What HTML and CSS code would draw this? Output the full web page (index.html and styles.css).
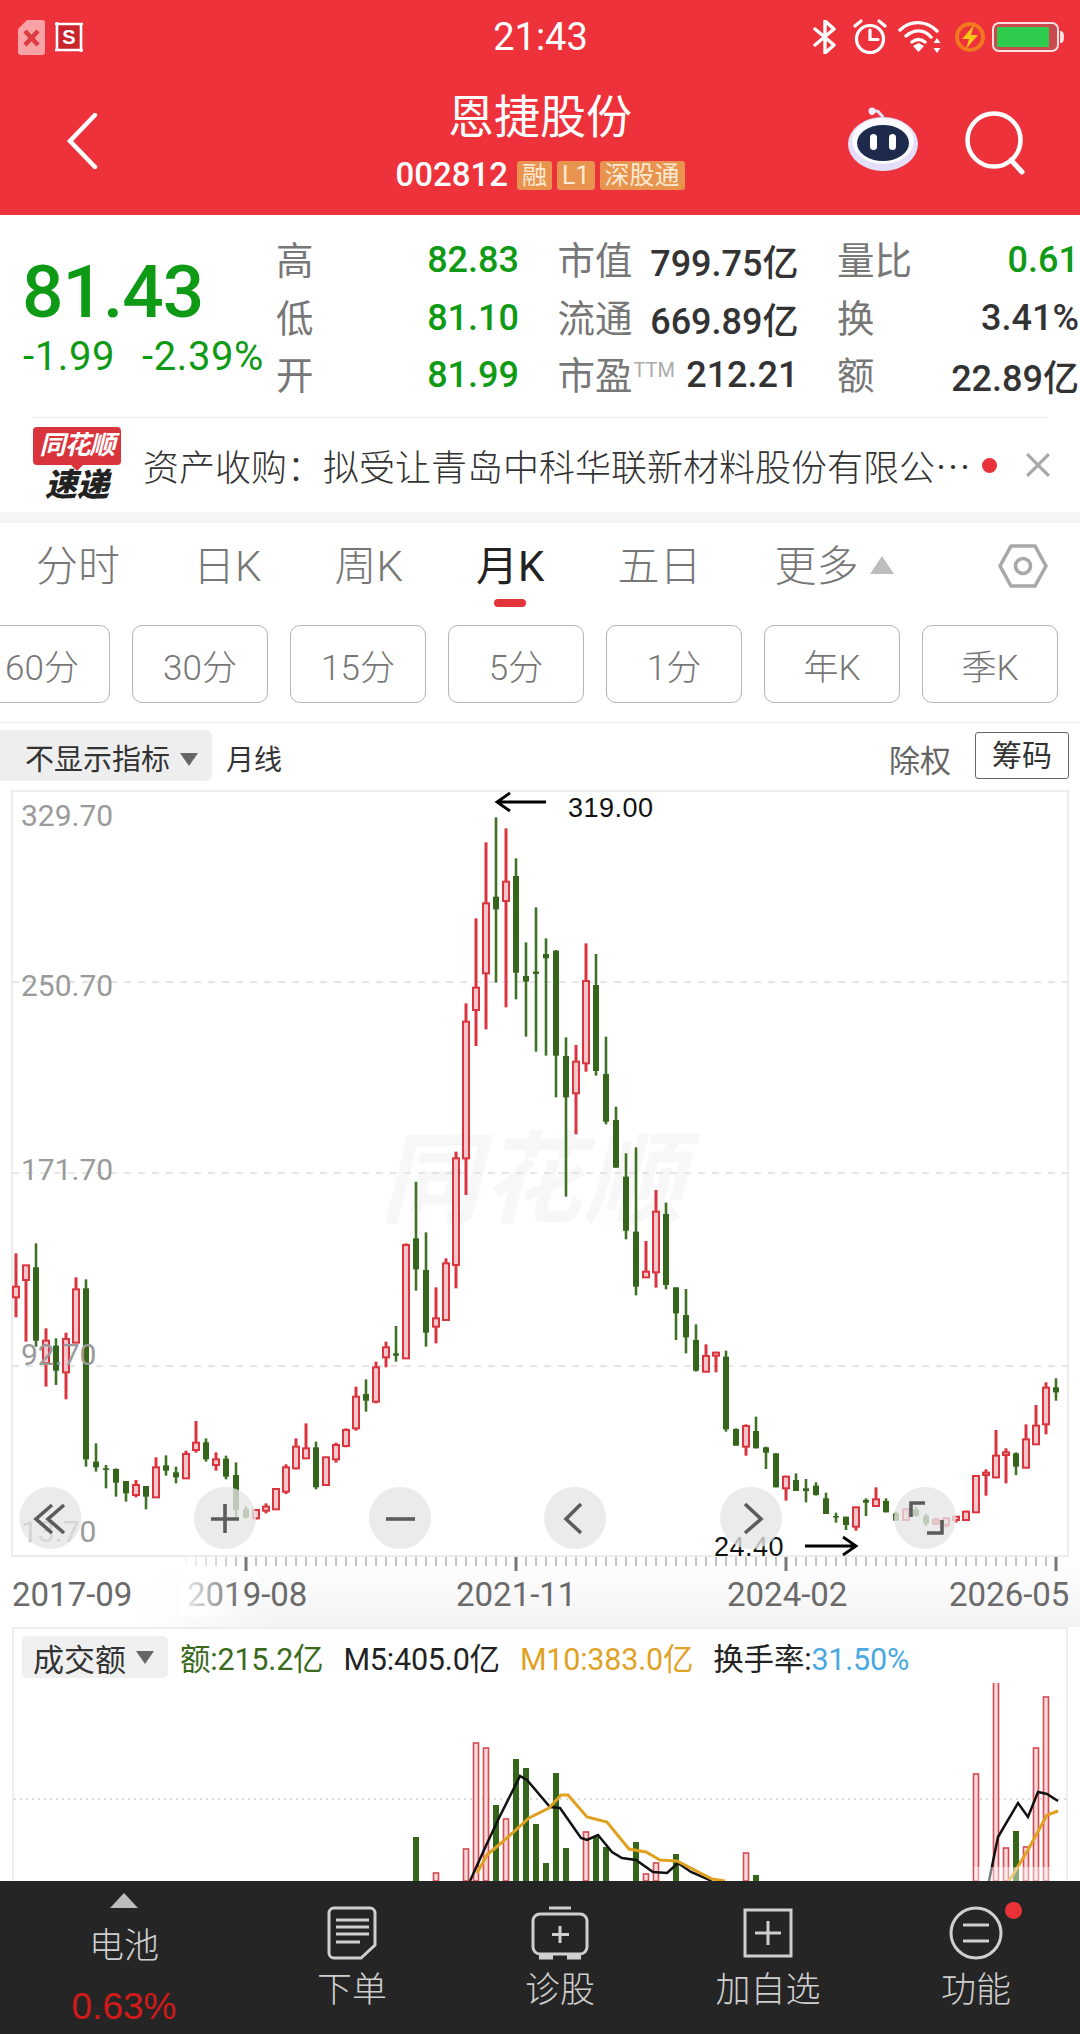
FILE: index.html
```html
<!DOCTYPE html>
<html lang="zh-CN">
<head>
<meta charset="utf-8">
<title>恩捷股份</title>
<link rel="stylesheet" href="styles.css">
</head>
<body>
<div class="page">
  <header class="hdr">
    <div class="status">
      <div class="status-left">
        <svg class="ico-sim" viewBox="0 0 27 35"><path d="M9 0h15a3 3 0 0 1 3 3v29a3 3 0 0 1-3 3H3a3 3 0 0 1-3-3V9z" fill="#f9a3a6"/><path d="M7 11l13 14M20 11L7 25" stroke="#dd3a42" stroke-width="4.5"/></svg>
        <svg class="ico-crop" viewBox="0 0 30 32"><rect x="3" y="3" width="24" height="26" fill="#c9232b"/><path d="M1 3h28M3 1v29M1 29h28M27 3v28" stroke="#fff" stroke-width="2.6" fill="none"/><text x="15" y="23" text-anchor="middle" class="crop-s">S</text></svg>
      </div>
      <div class="time">21:43</div>
      <div class="status-right">
        <svg class="ico-bt" viewBox="0 0 24 34"><path d="M2 9l19 16-9 8V1l9 8L2 25" fill="none" stroke="#fff" stroke-width="3.4" stroke-linejoin="round" stroke-linecap="round"/></svg>
        <svg class="ico-alarm" viewBox="0 0 34 36"><circle cx="17" cy="20" r="13.5" fill="none" stroke="#fff" stroke-width="3.2"/><path d="M17 11v9.5h8M2 7l6-5M32 7l-6-5" fill="none" stroke="#fff" stroke-width="3.2" stroke-linecap="round"/></svg>
        <svg class="ico-wifi" viewBox="0 0 46 34"><path d="M2 10C12 0 28 0 39 11M8 16c8-7 18-7 25 1M14 22c4-3 9-3 13 0" fill="none" stroke="#fff" stroke-width="3.4" stroke-linecap="round"/><path d="M15 26l5.500-3 5.500 3-5.500 6zM39 18l3.500 5h-7zM39 33l3.500-5h-7z" fill="#fff"/></svg>
        <svg class="ico-charge" viewBox="0 0 30 30"><circle cx="15" cy="15" r="13" fill="none" stroke="#f0781e" stroke-width="4"/><path d="M19 3L7 17h7l-3 10 12-14h-7z" fill="#fcc419"/></svg>
        <svg class="ico-bat" viewBox="0 0 73 30"><rect x="1" y="1" width="65" height="28" rx="6" fill="#c94a4e" stroke="#ffe1e1" stroke-width="2"/><rect x="5" y="5" width="52" height="20" fill="#2ecc4c"/><path d="M68 9c3 0 4 2 4 6s-1 6-4 6z" fill="#ffe1e1"/></svg>
      </div>
    </div>
    <div class="nav">
      <svg class="ico-back" viewBox="0 0 32 56"><path d="M29 2L4 28l25 26" fill="none" stroke="#fff" stroke-width="4.500" stroke-linecap="round"/></svg>
      <div class="nav-mid">
        <div class="title">恩捷股份</div>
        <div class="code-row"><span class="code">002812</span><span class="tag">融</span><span class="tag">L1</span><span class="tag">深股通</span></div>
      </div>
      <div class="nav-right">
        <svg class="ico-robot" viewBox="0 0 74 66"><path d="M26 10c-1-4 6-6 8-1 2 1 3 3 3 5" fill="none" stroke="#e4e2f7" stroke-width="3"/><circle cx="26" cy="6" r="3.500" fill="#f0eefc"/><ellipse cx="37" cy="39" rx="35" ry="27" fill="#e3dff8"/><ellipse cx="37" cy="36" rx="31" ry="23" fill="#fbfaff"/><ellipse cx="37" cy="38" rx="26" ry="18" fill="#1d2a4c"/><rect x="24" y="29" width="7" height="16" rx="3.500" fill="#fff"/><rect x="43" y="29" width="7" height="16" rx="3.500" fill="#fff"/></svg>
        <svg class="ico-search" viewBox="0 0 62 64"><circle cx="29" cy="29" r="26.500" fill="none" stroke="#fff" stroke-width="4.500"/><path d="M46 49l11 12" stroke="#fff" stroke-width="5" stroke-linecap="round"/></svg>
      </div>
    </div>
  </header>

  <section class="quote">
    <div class="price-col">
      <div class="price">81.43</div>
      <div class="chg"><span>-1.99</span><span>-2.39%</span></div>
    </div>
    <div class="stats">
      <div class="stat"><span class="k">高</span><span class="v up">82.83</span></div>
      <div class="stat"><span class="k">市值</span><span class="v">799.75亿</span></div>
      <div class="stat"><span class="k">量比</span><span class="v up">0.61</span></div>
      <div class="stat"><span class="k">低</span><span class="v up">81.10</span></div>
      <div class="stat"><span class="k">流通</span><span class="v">669.89亿</span></div>
      <div class="stat"><span class="k">换</span><span class="v">3.41%</span></div>
      <div class="stat"><span class="k">开</span><span class="v up">81.99</span></div>
      <div class="stat"><span class="k">市盈<sup class="ttm">TTM</sup></span><span class="v">212.21</span></div>
      <div class="stat"><span class="k">额</span><span class="v">22.89亿</span></div>
    </div>
  </section>

  <section class="news">
    <div class="news-in">
      <div class="logo">
        <div class="logo-top">同花顺</div>
        <div class="logo-bot">速递</div>
      </div>
      <div class="news-txt">资产收购：拟受让青岛中科华联新材料股份有限公…</div>
      <span class="dot"></span>
      <svg class="ico-x" viewBox="0 0 24 24"><path d="M2 2l20 20M22 2L2 22" stroke="#a9a9a9" stroke-width="3"/></svg>
    </div>
  </section>

  <nav class="tabs">
    <div class="tab">分时</div>
    <div class="tab">日K</div>
    <div class="tab">周K</div>
    <div class="tab on">月K</div>
    <div class="tab">五日</div>
    <div class="tab">更多</div>
    <span class="tri-up"></span>
    <svg class="ico-gear" viewBox="0 0 50 46"><path d="M2 23L13 3h24l11 20-11 20H13z" fill="none" stroke="#a8a8a8" stroke-width="3.600" stroke-linejoin="round"/><circle cx="25" cy="23" r="7.500" fill="none" stroke="#a8a8a8" stroke-width="3.600"/></svg>
  </nav>

  <div class="periods">
    <div class="pbtn">60分</div><div class="pbtn">30分</div><div class="pbtn">15分</div><div class="pbtn">5分</div><div class="pbtn">1分</div><div class="pbtn">年K</div><div class="pbtn">季K</div>
  </div>

  <div class="ind">
    <div class="ind-box">不显示指标<span class="tri-dn"></span></div>
    <div class="ind-line">月线</div>
    <div class="ind-fq">除权</div>
    <div class="ind-cm">筹码</div>
  </div>

  <svg class="chart" viewBox="0 790 1080 837">
    <defs>
      <linearGradient id="gBand" x1="0" y1="0" x2="0" y2="1"><stop offset="0" stop-color="#fff"/><stop offset="1" stop-color="#f3f3f3"/></linearGradient>
      <linearGradient id="gLeft" x1="0" y1="0" x2="1" y2="0"><stop offset="0" stop-color="#fff"/><stop offset="1" stop-color="#fff" stop-opacity="0"/></linearGradient>
      <linearGradient id="gFade" x1="0" y1="0" x2="1" y2="0"><stop offset="0" stop-color="#fff" stop-opacity=".95"/><stop offset="1" stop-color="#fff" stop-opacity="0"/></linearGradient>
    </defs>
    <rect x="0" y="1557" width="1080" height="70" fill="url(#gBand)"/>
    <rect x="0" y="1557" width="130" height="70" fill="#fff"/>
    <rect x="130" y="1557" width="150" height="70" fill="url(#gLeft)"/>
    <rect x="12" y="791" width="1056" height="765" fill="#fff" stroke="#ececec" stroke-width="2"/>
    <text x="380" y="1215" class="wm">同花顺</text>
    <path d="M12 982H1068M12 1173H1068M12 1366H1068" stroke="#dedede" stroke-width="1.500" stroke-dasharray="7 7"/>
    <g id="candles"></g>
    <g class="ylab">
      <text x="21" y="826">329.70</text>
      <text x="21" y="996">250.70</text>
      <text x="21" y="1180">171.70</text>
      <text x="21" y="1365">92.70</text>
      <text x="21" y="1542">13.70</text>
    </g>
    <path d="M546 802H497M510 793l-13 9 13 9" fill="none" stroke="#000" stroke-width="2.800"/>
    <text x="568" y="817" class="note">319.00</text>
    <text x="714" y="1556" class="note">24.40</text>
    <path d="M805 1546H856M843 1537l13 9-13 9" fill="none" stroke="#000" stroke-width="2.800"/>
    <g class="btns">
      <circle cx="50.500" cy="1518" r="31"/><circle cx="225" cy="1518" r="31"/><circle cx="400" cy="1518" r="31"/><circle cx="575" cy="1518" r="31"/><circle cx="751" cy="1518" r="31"/><circle cx="925" cy="1518" r="31"/>
    </g>
    <g class="btn-ic">
      <path d="M52 1505l-16 14 16 14M64 1505l-16 14 16 14"/>
      <path d="M211 1519h28M225 1504v29"/>
      <path d="M386 1519h29"/>
      <path d="M581 1504l-15 15 15 14"/>
      <path d="M745 1504l16 15-16 14"/>
      <path d="M911 1517v-14h14M942 1520v13h-15"/>
    </g>
    <g id="ticks"></g>
    <g class="xlab">
      <text x="12" y="1606">2017-09</text>
      <text x="187" y="1606">2019-08</text>
      <text x="456" y="1606">2021-11</text>
      <text x="727" y="1606">2024-02</text>
      <text x="949" y="1606">2026-05</text>
    </g>
    <rect x="180" y="1557" width="60" height="60" fill="url(#gFade)"/>
  </svg>

  <section class="vol">
    <div class="vol-head">
      <div class="vol-box">成交额<span class="tri-dn"></span></div>
      <span class="lg lg-g">额:215.2亿</span>
      <span class="lg lg-k">M5:405.0亿</span>
      <span class="lg lg-o">M10:383.0亿</span>
      <span class="lg lg-k">换手率:<span class="lg-b">31.50%</span></span>
    </div>
    <svg class="vol-chart" viewBox="0 1683 1052 198">
      <path d="M0 1799H1052" stroke="#dcdcdc" stroke-width="2" stroke-dasharray="2 4"/>
      <g id="vols"></g>
      <polyline class="ma-k" points="456,1881 470,1850 484,1820 506,1776 513,1780 536,1807 546,1808 567,1838 573,1840 584,1835 598,1852 608,1858 622,1860 639,1872 653,1873 664,1863 677,1872 698,1881"/>
      <polyline class="ma-k" points="975,1881 984,1837 1004,1803 1014,1817 1024,1792 1033,1794 1044,1801"/>
      <polyline class="ma-o" points="463,1873 473,1855 494,1837 515,1818 535,1808 547,1795 554,1795 573,1817 593,1822 615,1849 632,1852 646,1860 663,1861 698,1879 711,1881"/>
      <polyline class="ma-o" points="995,1881 1014,1850 1033,1815 1044,1811"/>
      <rect x="960" y="1867" width="84" height="14" fill="#fff" opacity=".45"/>
    </svg>
  </section>

  <footer class="bar">
    <div class="bar-first">
      <span class="bar-tri"></span>
      <div class="bar-lab">电池</div>
      <div class="bar-pct">0.63%</div>
    </div>
    <div class="bar-item">
      <svg class="bar-ic" viewBox="0 0 50 54"><path d="M7 2h36a5 5 0 0 1 5 5v32L34 52H7a5 5 0 0 1-5-5V7a5 5 0 0 1 5-5z" fill="none" stroke="#cfcfcf" stroke-width="3"/><path d="M9 14h33M9 21h33M9 28h33M9 36h24" stroke="#cfcfcf" stroke-width="3"/></svg>
      <div class="bar-lab">下单</div>
    </div>
    <div class="bar-item">
      <svg class="bar-ic" viewBox="0 0 58 54"><path d="M18 2h22" stroke="#cfcfcf" stroke-width="3"/><rect x="2" y="8" width="54" height="40" rx="7" fill="none" stroke="#cfcfcf" stroke-width="3"/><path d="M8 51h14M36 51h14" stroke="#cfcfcf" stroke-width="5"/><path d="M29 20v17M21 28.500h17" stroke="#cfcfcf" stroke-width="3"/></svg>
      <div class="bar-lab">诊股</div>
    </div>
    <div class="bar-item">
      <svg class="bar-ic" viewBox="0 0 50 54"><rect x="2" y="4" width="46" height="46" fill="none" stroke="#cfcfcf" stroke-width="3"/><path d="M25 15v24M12 27h26" stroke="#cfcfcf" stroke-width="3"/></svg>
      <div class="bar-lab">加自选</div>
    </div>
    <div class="bar-item bar-fn">
      <svg class="bar-ic" viewBox="0 0 54 54"><circle cx="27" cy="27" r="25" fill="none" stroke="#cfcfcf" stroke-width="3"/><path d="M14 19h26M14 35h26" stroke="#cfcfcf" stroke-width="3"/></svg>
      <span class="bar-dot"></span>
      <div class="bar-lab">功能</div>
    </div>
  </footer>
</div>
<script src="chart.js"></script>
</body>
</html>
```
FILE: styles.css
```css
* { box-sizing: border-box; }
html, body { margin: 0; padding: 0; background: #fff; }
body { width: 1080px; height: 2034px; overflow: hidden; font-family: Roboto, "Noto Sans CJK SC", sans-serif; color: #333; }
.page { width: 1080px; height: 2034px; display: flex; flex-direction: column; overflow: hidden; }

.hdr { height: 215px; background: #ee323b; color: #fff; flex: none; }
.status { height: 70px; display: grid; grid-template-columns: 1fr auto 1fr; align-items: center; padding: 4px 15px 0 18px; }
.status-left { display: flex; align-items: center; gap: 9px; }
.ico-sim { width: 27px; height: 35px; }
.ico-crop { width: 30px; height: 32px; }
.crop-s { font: 700 20px "Liberation Sans", sans-serif; fill: #fff; }
.time { font-size: 38px; line-height: 44px; margin-left: -2px; }
.status-right { display: flex; align-items: center; justify-content: flex-end; }
.ico-bt { width: 24px; height: 34px; margin-right: 16px; }
.ico-alarm { width: 34px; height: 36px; margin-right: 11px; }
.ico-wifi { width: 46px; height: 34px; margin-right: 11px; }
.ico-charge { width: 30px; height: 30px; margin-right: 7px; }
.ico-bat { width: 73px; height: 30px; }

.nav { height: 145px; display: grid; grid-template-columns: 1fr auto 1fr; padding: 0 18px; }
.ico-back { width: 32px; height: 56px; margin: 43px 0 0 48px; }
.nav-mid { display: flex; flex-direction: column; align-items: center; padding-top: 14px; }
.title { font-size: 46px; line-height: 66px; }
.code-row { display: flex; align-items: center; margin-top: 10px; gap: 5px; }
.code { font-size: 33px; line-height: 30px; margin-right: 4px; font-weight: 500; }
.tag { height: 29px; line-height: 29px; padding: 0 5px; background: #e8944f; border-radius: 3px; font-size: 25px; color: #fbe9d2; }
.nav-right { display: flex; justify-content: flex-end; align-items: flex-start; padding-top: 34px; }
.ico-robot { width: 74px; height: 66px; margin-top: 1px; }
.ico-search { width: 62px; height: 64px; margin: 7px 35px 0 45px; }

.quote { height: 202px; flex: none; display: flex; }
.price-col { width: 277px; flex: none; padding: 35px 0 0 22px; }
.price { font-size: 73px; line-height: 84px; font-weight: 500; color: #0f9a16; letter-spacing: -1px; }
.chg { display: flex; gap: 27px; font-size: 40px; line-height: 44px; color: #0f9a16; margin-top: 1px; padding-left: 1px; letter-spacing: .6px; }
.stats { flex: none; width: 802px; display: grid; grid-template-columns: 242px 240px 241px; column-gap: 39.500px; grid-auto-rows: 57.500px; padding-top: 14px; align-content: start; }
.stat { display: flex; justify-content: space-between; align-items: center; font-size: 36px; white-space: nowrap; }
.k { color: #777; font-size: 37.500px; margin-left: -1px; }
.v { font-weight: 500; color: #333; padding-top: 5px; }
.v.up { color: #0f9a16; }
.ttm { font-size: 20px; color: #aaa; vertical-align: 12px; line-height: 0; margin-left: 1px; }

.news { height: 106px; flex: none; border-bottom: 11px solid #f5f5f5; padding: 0 32px; }
.news-in { height: 95px; display: flex; align-items: center; border-top: 1.500px solid #eeeeee; }
.logo { width: 88px; flex: none; margin-left: 1px; text-align: center; position: relative; }
.logo-top { height: 38px; line-height: 37px; background: #d9343c; color: #fff; border-radius: 4px; font-size: 26px; font-style: italic; font-weight: 700; letter-spacing: -1px; }
.logo-top::after { content: ""; position: absolute; left: 37px; top: 37px; border-left: 7px solid transparent; border-right: 7px solid transparent; border-top: 7px solid #d9343c; }
.logo-bot { color: #222; font-size: 32px; line-height: 38px; font-style: italic; font-weight: 900; margin-top: 1px; }
.news-txt { margin-left: 22px; font-family: "Noto Sans CJK SC", sans-serif; font-size: 36px; font-weight: 300; white-space: nowrap; color: #333; flex: none; width: 828px; }
.dot { width: 15px; height: 15px; border-radius: 50%; background: #e8333a; margin-left: 11px; flex: none; }
.ico-x { width: 26px; height: 26px; margin-left: 28px; flex: none; }

.tabs { height: 102px; flex: none; display: flex; align-items: flex-start; gap: 73px; padding: 20px 32px 0 36px; font-size: 42px; }
.tab { line-height: 48px; color: #777; font-weight: 300; white-space: nowrap; }
.tab::after { content: ""; display: block; width: 32px; height: 8px; margin: 8px auto 0; border-radius: 4px; }
.tab.on { color: #222; font-weight: 400; }
.tab.on::after { background: #e3333b; }
.tri-up { width: 0; height: 0; margin: 13px 0 0 -61px; border-left: 12px solid transparent; border-right: 12px solid transparent; border-bottom: 18px solid #bdbdbd; }
.ico-gear { width: 50px; height: 46px; margin-left: auto; }

.periods { height: 98px; flex: none; display: flex; gap: 22px; margin-left: -26px; padding-bottom: 19px; border-bottom: 1.500px solid #eeeeee; width: 1106px; }
.pbtn { width: 136px; flex: none; border: 1.500px solid #b5b5b5; border-radius: 10px; font-size: 35px; color: #777; display: flex; align-items: center; justify-content: center; font-weight: 300; }

.ind { height: 67px; flex: none; display: flex; align-items: center; font-size: 29px; }
.ind-box { width: 212px; height: 51px; background: #eeeeee; border-radius: 0 6px 6px 0; padding: 8px 0 0 25px; line-height: 44px; display: flex; align-items: center; margin-top: -2px; color: #333; }
.tri-dn { width: 0; height: 0; margin-left: 10px; border-left: 9px solid transparent; border-right: 9px solid transparent; border-top: 13px solid #666; }
.ind-line { margin-left: 14px; font-size: 28px; color: #333; padding-top: 2px; }
.ind-fq { margin-left: auto; font-size: 31px; color: #666; padding-top: 3px; }
.ind-cm { width: 94px; height: 47px; border: 1.500px solid #666; border-radius: 3px; margin: -3px 11px 0 24px; text-align: center; line-height: 45px; font-size: 30px; color: #333; }

.chart { width: 1080px; height: 837px; display: block; flex: none; }
.ylab text { font: 400 30px Roboto, sans-serif; fill: #9a9a9a; }
.note { font: 400 27px "Liberation Sans", sans-serif; fill: #111; letter-spacing: .5px; }
.xlab text { font: 400 33px Roboto, sans-serif; fill: #6a6a6a; }
.wm { font: italic 700 100px "Noto Sans CJK SC", sans-serif; fill: #f7f7f7; letter-spacing: 2px; }
.btns circle { fill: #e6e6e6; fill-opacity: .78; }
.btn-ic path { fill: none; stroke: #5c5c5c; stroke-width: 3.600; }

.vol { flex: none; height: 254px; margin: 0 12px; border: 2px solid #eeeeee; border-bottom: 0; }
.vol-head { height: 54px; display: flex; align-items: center; padding: 2px 0 0 8px; font-size: 30.500px; white-space: nowrap; }
.vol-box { width: 146px; height: 42px; background: #f0f0f0; border-radius: 5px; padding-left: 11px; display: flex; align-items: center; margin-right: 12px; font-size: 31px; color: #333; }
.lg { margin-right: 20px; letter-spacing: -.2px; }
.lg-g { color: #3a6b1d; }
.lg-k { color: #222; }
.lg-o { color: #dfa226; }
.lg-b { color: #4aa8e0; }
.vol-chart { width: 1052px; height: 198px; display: block; }
.ma-k { fill: none; stroke: #111; stroke-width: 2.500; }
.ma-o { fill: none; stroke: #e0a020; stroke-width: 3; }

.bar { height: 153px; flex: none; background: #252525; display: grid; grid-template-columns: 248px repeat(4, 208px); color: #cfcfcf; }
.bar-first { display: flex; flex-direction: column; align-items: center; padding-top: 12px; }
.bar-tri { width: 0; height: 0; border-left: 14px solid transparent; border-right: 14px solid transparent; border-bottom: 15px solid #bdbdbd; }
.bar-lab { font-size: 35px; line-height: 44px; font-weight: 300; }
.bar-first .bar-lab { margin-top: 17px; }
.bar-pct { font: 400 37px/44px "Liberation Sans", sans-serif; color: #d21a1a; margin-top: 16px; }
.bar-item { display: flex; flex-direction: column; align-items: center; padding-top: 25px; position: relative; }
.bar-ic { height: 54px; display: block; margin-bottom: 9px; }
.bar-dot { position: absolute; width: 17px; height: 17px; border-radius: 50%; background: #ea3338; top: 21px; left: 133px; }
```
FILE: chart.js
```js
// [up(1)/down(0), high, bodyTop, bodyBottom, low]; y = base + v / 3
var segments = [
  [1190, [
    [1,190,290,322,382],[1,225,226,270,455],[0,160,232,452,470],[1,415,452,520,590],[0,445,467,542,585],
    [1,428,447,547,628],[1,262,298,458,458],[0,268,295,808,830],[0,760,815,832,845],[0,825,835,840,895],
    [0,835,837,878,920],[0,873,873,910,935],[1,870,885,915,922],[0,888,888,920,958],[1,802,832,922,922],
    [0,796,826,842,857],[0,830,847,862,880],[1,782,792,865,865],[1,693,758,780,788],[0,745,757,808,815],
    [1,787,808,825,842],[0,797,806,860,868],[0,817,855,960,985],[0,950,958,982,985],[1,958,960,985,988],
    [1,940,950,962,970],[1,895,897,958,960],[1,823,832,905,912],[1,745,770,835,838],[1,700,775,805,805],
    [0,755,772,892,898],[1,800,802,885,885],[1,758,765,808,818],[1,715,720,768,772],[1,590,620,715,722],
    [0,568,612,632,665],[1,515,532,635,640],[1,455,472,502,532],[0,408,490,497,515],[1,160,165,505,505],
    [0,-25,145,238,302],[0,127,240,428,470],[1,292,385,410,460],[1,205,220,390,390],[1,-115,-95,225,295]
  ]],
  [790, [
    [1,640,695,1105,1215],[1,385,593,660,768],[1,157,340,550,718],[0,82,320,358,578],[1,115,275,333,652],
    [0,205,258,548,628],[0,457,558,575,740],[0,352,545,552,785],[0,445,492,505,797],[0,480,482,797,922],
    [0,742,798,922,1220],[1,765,815,910,1033],[1,460,573,820,845],[0,492,585,843,857],[0,740,852,995,1003],
    [0,950,990,1133,1133]
  ]],
  [1190, [
    [0,-110,-40,122,148],[0,-128,125,290,316],[1,153,245,262,262],[1,0,65,247,293],[0,38,72,285,298],
    [0,292,292,370,450],[0,297,375,442,490],[0,403,450,542,545],[1,463,498,545,547],[1,485,488,497,547],
    [0,482,500,718,725],[0,715,717,767,767],[1,703,708,770,797],[0,680,723,775,775],[0,770,772,788,837],
    [0,790,790,892,892],[1,857,860,895,932],[0,850,870,903,903],[0,867,895,903,937],[0,877,887,915,917],
    [0,908,925,972,972],[0,968,978,982,998],[0,980,980,1005,1020],[1,950,952,1010,1022],[0,925,930,938,978],
    [1,892,928,948,950],[0,925,933,967,967],[0,965,970,992,992],[1,955,958,990,990],[0,950,958,978,980],
    [0,972,978,1000,1008],[1,983,990,1000,1005],[1,982,985,1005,1012],[1,978,980,990,998],[1,962,965,990,990],
    [1,855,858,967,967],[1,838,848,855,917],[1,720,797,862,865],[1,775,787,795,880],[0,787,790,830,855],
    [1,703,748,833,835],[1,645,707,763,765],[1,577,593,703,733],[0,565,592,607,632]
  ]]
];

var NS = "http://www.w3.org/2000/svg";
function el(parent, name, attrs) {
  var n = document.createElementNS(NS, name);
  for (var k in attrs) n.setAttribute(k, attrs[k]);
  parent.appendChild(n);
  return n;
}

var RED = "#d8353f", PINK = "#f8c6ca", GREEN = "#35651a", WICK = "#3f7225";
var candles = document.getElementById("candles");
var i = 0;
segments.forEach(function (seg) {
  var base = seg[0];
  seg[1].forEach(function (c) {
    var x = 16 + 10 * i, up = c[0];
    var y = function (v) { return base + v / 3; };
    el(candles, "line", { x1: x, x2: x, y1: y(c[1]), y2: y(c[4]), stroke: up ? RED : WICK, "stroke-width": up ? 3 : 2.6 });
    var h = Math.max(y(c[3]) - y(c[2]), 1.5);
    if (up) {
      el(candles, "rect", { x: x - 3, y: y(c[2]), width: 6, height: h, fill: PINK, stroke: RED, "stroke-width": 2 });
    } else {
      el(candles, "rect", { x: x - 3, y: y(c[2]), width: 6, height: h, fill: GREEN });
    }
    i++;
  });
});

// ticks under the axis, one per month
var ticks = document.getElementById("ticks");
for (var t = 17; t <= 104; t++) {
  var tx = 16 + 10 * t;
  var major = (t - 23) % 27 === 0;
  el(ticks, "line", { x1: tx, x2: tx, y1: 1557, y2: major ? 1571 : 1566, stroke: major ? "#777" : "#aaa", "stroke-width": major ? 3 : 1.4 });
}

// volume bars [month index, top y]
var bars = [
  [40,1837,0],[42,1873,1],[45,1849,1],[46,1743,1],[47,1748,1],[48,1805,0],[49,1819,1],[50,1759,0],[51,1768,0],
  [52,1824,0],[53,1863,0],[54,1773,0],[55,1848,0],[57,1832,1],[58,1837,0],[59,1847,0],[62,1842,0],[63,1874,1],
  [64,1863,1],[66,1854,0],[73,1853,1],[74,1875,0],[96,1774,1],[98,1682,1],[99,1848,1],[100,1831,0],[101,1847,1],
  [102,1748,1],[103,1697,1]
];
var vols = document.getElementById("vols");
bars.forEach(function (b) {
  var x = 16 + 10 * b[0] - 14; // panel svg starts at page x = 14
  if (b[2]) {
    el(vols, "rect", { x: x - 2.5, y: b[1], width: 5, height: 1881 - b[1], fill: "#f9d9db", stroke: "#d64a52", "stroke-width": 1.6 });
  } else {
    el(vols, "rect", { x: x - 3, y: b[1], width: 6, height: 1881 - b[1], fill: GREEN });
  }
});
```
